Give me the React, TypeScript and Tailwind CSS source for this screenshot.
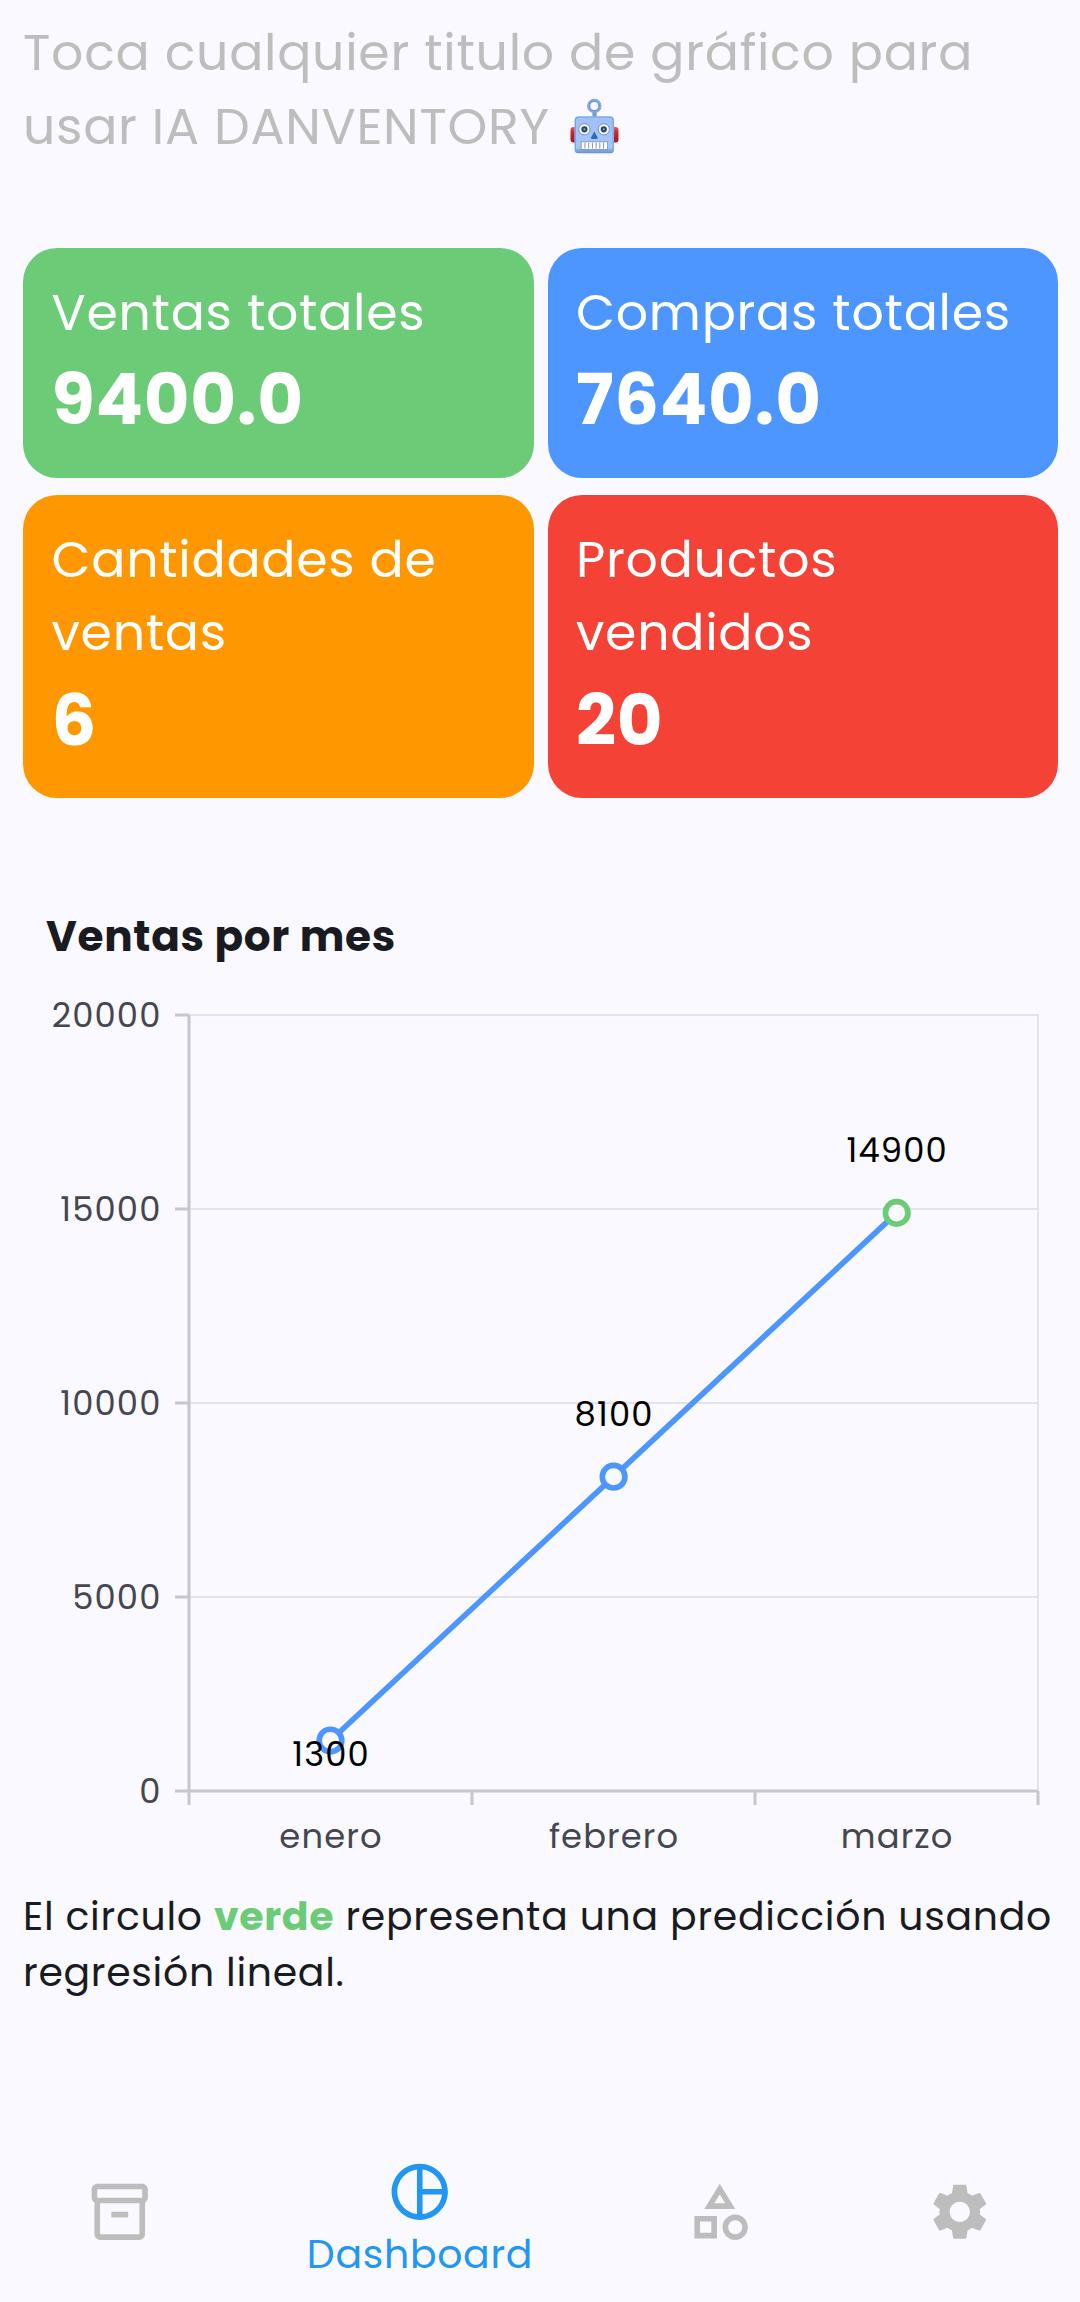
import type { ReactNode } from 'react';
import {
  MdOutlineCategory,
  MdOutlineInventory2,
  MdOutlinePieChartOutline,
  MdSettings,
} from 'react-icons/md';

function Robot() {
  return (
    <svg viewBox="0 0 49 56" className="block h-[56px] w-[49px]">
      <defs>
        <linearGradient id="head" x1="0" y1="0" x2="0" y2="1">
          <stop offset="0" stopColor="#b3cefb" />
          <stop offset="0.08" stopColor="#9fc0f7" />
          <stop offset="0.85" stopColor="#a6c6fb" />
          <stop offset="1" stopColor="#5580b4" />
        </linearGradient>
        <linearGradient id="ear" x1="0" y1="0" x2="0" y2="1">
          <stop offset="0" stopColor="#d8616c" />
          <stop offset="0.35" stopColor="#cc2431" />
          <stop offset="1" stopColor="#a01722" />
        </linearGradient>
      </defs>
      <rect x="0.5" y="29" width="48" height="15.5" rx="3" fill="url(#ear)" />
      <rect x="22.4" y="12" width="4.2" height="8" fill="#6f98d3" />
      <circle cx="24.3" cy="8" r="5.6" fill="none" stroke="#6f98d3" strokeWidth="3.2" />
      <circle cx="24.3" cy="8" r="6.2" fill="none" stroke="#92b7ee" strokeWidth="1" />
      <rect x="4.5" y="18.3" width="39.6" height="37" rx="4" fill="url(#head)" />
      <rect x="5.4" y="19.2" width="37.8" height="34.6" rx="3.4" fill="none" stroke="#7da4dc" strokeWidth="1.2" />
      <g>
        <circle cx="14.4" cy="31.3" r="5.6" fill="#f4fbff" stroke="#7392b5" strokeWidth="1" />
        <circle cx="14.4" cy="31.3" r="3.1" fill="#244a6d" />
        <circle cx="14.4" cy="31.3" r="1.1" fill="#7fa7c7" />
        <circle cx="33.8" cy="31.3" r="5.6" fill="#f4fbff" stroke="#7392b5" strokeWidth="1" />
        <circle cx="33.8" cy="31.3" r="3.1" fill="#244a6d" />
        <circle cx="33.8" cy="31.3" r="1.1" fill="#7fa7c7" />
      </g>
      <path d="M24.3 33.4 L28 40.2 Q24.3 42 20.6 40.2 Z" fill="#2d6bb7" />
      <rect x="11.2" y="43.8" width="26.4" height="7.6" fill="#fff" stroke="#7292bd" strokeWidth="0.8" />
      <path d="M15 44.6V50.6M18.7 44.6V50.6M22.4 44.6V50.6M26.1 44.6V50.6M29.8 44.6V50.6M33.5 44.6V50.6" stroke="#8d9aa8" strokeWidth="1.1" />
    </svg>
  );
}

function StatCard({ label, value, color }: { label: string; value: string; color: string }) {
  return (
    <div className={`rounded-[34px] pt-[28px] pr-4 pb-[27.3px] pl-[28.5px] text-white ${color}`}>
      <div className="text-[50.6px] leading-[73.3px]">{label}</div>
      <div className="mt-[1.5px] text-[70.3px] leading-[100.5px] font-bold">{value}</div>
    </div>
  );
}

const points = [
  { month: 'enero', value: 1300, labelY: 1765.5, stroke: '#4d96ff' },
  { month: 'febrero', value: 8100, labelY: 1426, stroke: '#4d96ff' },
  { month: 'marzo', value: 14900, labelY: 1161.5, stroke: '#6bcb77' },
];
const ticks = [0, 5000, 10000, 15000, 20000];
const yOf = (v: number) => 1791 - v * 0.0388;
const xOf = (i: number) => 330.5 + i * 283.1;

function LineChart() {
  return (
    <svg viewBox="0 968 1080 920" className="block h-[920px] w-full shrink-0 tracking-[1.125px]">
      {ticks.map((t) => (
        <g key={t}>
          {t > 0 && <path d={`M189 ${yOf(t)}H1039`} stroke="#e3e3e9" strokeWidth="2" />}
          <path d={`M175 ${yOf(t)}H189`} stroke="#c5c6d0" strokeWidth="3" />
          <text x="161.5" y={yOf(t) + 11.5} textAnchor="end" className="fill-[#46464f] text-[33.75px]">
            {t}
          </text>
        </g>
      ))}
      <path d="M1038 1014V1791" stroke="#e3e3e9" strokeWidth="2" />
      <path d="M189 1015V1805M472 1791V1805M755 1791V1805M1038 1791V1805M188 1791H1038" stroke="#c5c6d0" strokeWidth="3" fill="none" />
      <path
        d={`M${xOf(0)} ${yOf(1300)}L${xOf(2)} ${yOf(14900)}`}
        stroke="#4d96ff"
        strokeWidth="5.6"
      />
      {points.map((p, i) => (
        <g key={p.month}>
          <circle cx={xOf(i)} cy={yOf(p.value)} r="11.3" fill="#faf9ff" stroke={p.stroke} strokeWidth="5.6" />
          <text x={xOf(i) + 0.5} y="1847.5" textAnchor="middle" className="fill-[#46464f] text-[33.75px]">
            {p.month}
          </text>
        </g>
      ))}
      {points.map((p, i) => (
        <text key={p.value} x={xOf(i) + 0.5} y={p.labelY} textAnchor="middle" className="fill-black text-[33.75px]">
          {p.value}
        </text>
      ))}
    </svg>
  );
}

function NavItem({ icon, label, className }: { icon: ReactNode; label?: string; className: string }) {
  return (
    <div className={`flex flex-col items-center justify-center ${className}`}>
      {icon}
      {label && <span className="text-[39.4px] leading-[57px]">{label}</span>}
    </div>
  );
}

export default function App() {
  return (
    <div className="flex h-[2302px] w-[1080px] flex-col bg-[#faf9ff] font-[Poppins,Inter,sans-serif] tracking-[0.7px] text-[#1a1b21]">
      <div className="h-[247.5px] pt-[16px] pl-[23px] text-[50.6px] leading-[73.8px] text-[#bdbdbd]">
        <p>Toca cualquier titulo de gráfico para</p>
        <p className="flex">
          usar IA DANVENTORY
          <span className="pt-[8.5px] pl-[20px]">
            <Robot />
          </span>
        </p>
      </div>

      <div className="mr-[22px] ml-[23px] grid grid-cols-2 gap-x-[14px] gap-y-[16.5px]">
        <StatCard label="Ventas totales" value="9400.0" color="bg-[#6bcb77]" />
        <StatCard label="Compras totales" value="7640.0" color="bg-[#4d96ff]" />
        <StatCard label="Cantidades de ventas" value="6" color="bg-[#ff9800]" />
        <StatCard label="Productos vendidos" value="20" color="bg-[#f44336]" />
      </div>

      <h2 className="mt-[107.5px] pl-[46px] text-[42.2px] leading-[62px] font-bold">Ventas por mes</h2>
      <LineChart />

      <p className="pt-px pl-[23px] text-[39.4px] leading-[56.2px]">
        El circulo <b className="text-[#6bcb77]">verde</b> representa una predicción usando
        <br />
        regresión lineal.
      </p>

      <nav className="mt-auto flex h-[180px] text-[#bdbdbd]">
        <NavItem className="w-[240px]" icon={<MdOutlineInventory2 size={67.5} />} />
        <NavItem className="w-[360px] pt-[17px] text-[#2196f3]" icon={<MdOutlinePieChartOutline size={67.5} />} label="Dashboard" />
        <NavItem className="w-[240px]" icon={<MdOutlineCategory size={67.5} />} />
        <NavItem className="w-[240px]" icon={<MdSettings size={67.5} />} />
      </nav>
    </div>
  );
}
